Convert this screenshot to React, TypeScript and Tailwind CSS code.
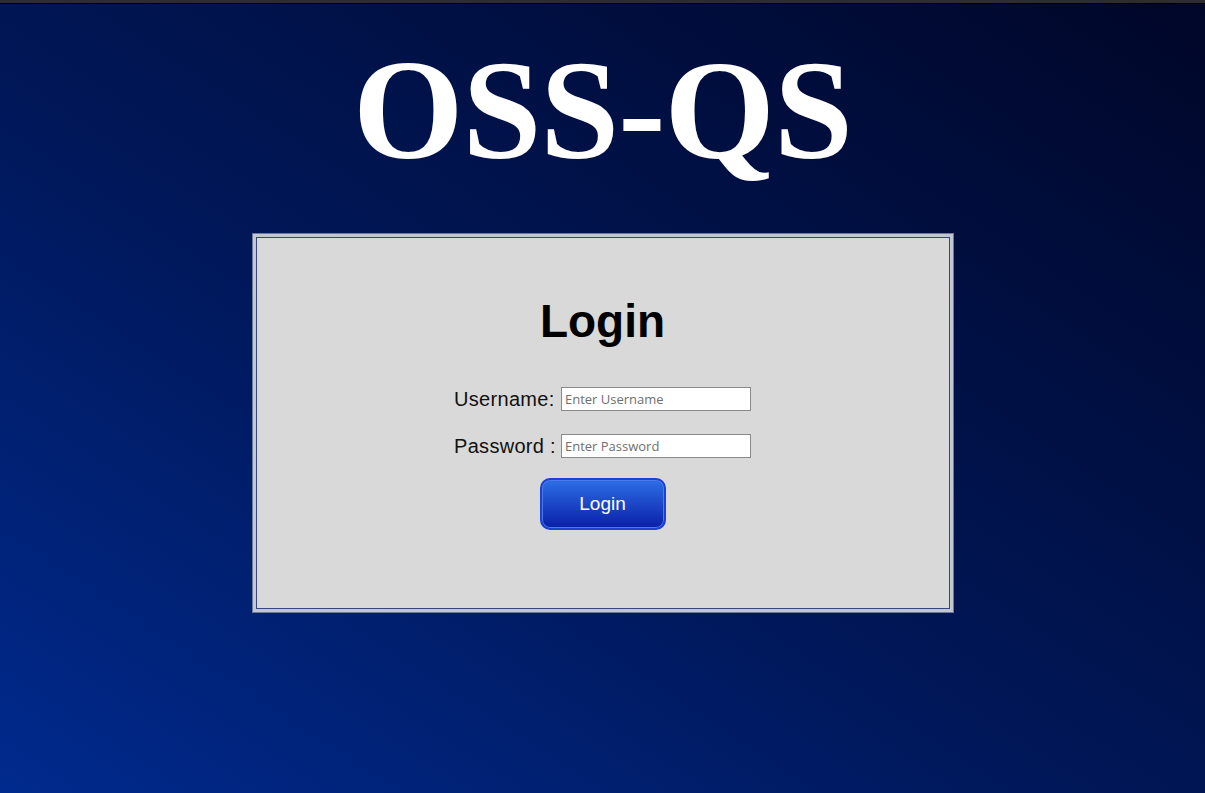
export default function App() {
  return (
    <div className="min-h-screen w-full flex flex-col bg-[linear-gradient(to_top_right,#002a8e_0%,#001758_45%,#000628_100%)]">
      {/* browser strip */}
      <div className="h-[4px] bg-[#2c2c32] border-b border-black" />

      {/* Title */}
      <h1 className="mt-[35px] text-center text-white font-bold leading-none text-[142px] font-['Liberation_Serif','Times_New_Roman',serif] tracking-[-1px]">
        OSS-QS
      </h1>

      {/* Login box */}
      <div className="mx-auto mt-[53px] w-[700px] h-[378px] bg-[#d9d9d9] border-[3px] border-[#c2c8d2] ring-1 ring-[#6d7b98] shadow-[inset_0_0_0_1px_#34467a] flex flex-col items-center">
        <h2 className="mt-[61px] text-[46px] leading-none font-bold text-black font-['Liberation_Sans',Arial,sans-serif]">
          Login
        </h2>

        <div className="mt-[40px] grid grid-cols-[auto_auto] gap-x-[5px] gap-y-[17px] items-center">
          <label className="text-[20px] text-[#111] font-['Liberation_Sans',Arial,sans-serif] tracking-[0.3px]">
            Username:
          </label>
          <input
            type="text"
            placeholder="Enter Username"
            className="w-[190px] h-[24px] bg-white border border-[#8a8a8a] px-[3px] text-[13px] font-['Open_Sans',sans-serif] placeholder:text-[#6f6f6f] outline-none"
          />
          <label className="text-[20px] text-[#111] font-['Liberation_Sans',Arial,sans-serif] tracking-[0.3px]">
            Password :
          </label>
          <input
            type="password"
            placeholder="Enter Password"
            className="w-[190px] h-[24px] bg-white border border-[#8a8a8a] px-[3px] text-[13px] font-['Open_Sans',sans-serif] placeholder:text-[#6f6f6f] outline-none"
          />
        </div>

        <button className="mt-[17px] w-[126px] h-[52px] rounded-[10px] border-2 border-[#1c3fd4] bg-[linear-gradient(to_bottom,#2d6ee6,#0a1fa8)] text-white text-[19px] font-['Liberation_Sans',Arial,sans-serif] shadow-[inset_0_0_0_1px_#4a7ae8]">
          Login
        </button>
      </div>
    </div>
  );
}
